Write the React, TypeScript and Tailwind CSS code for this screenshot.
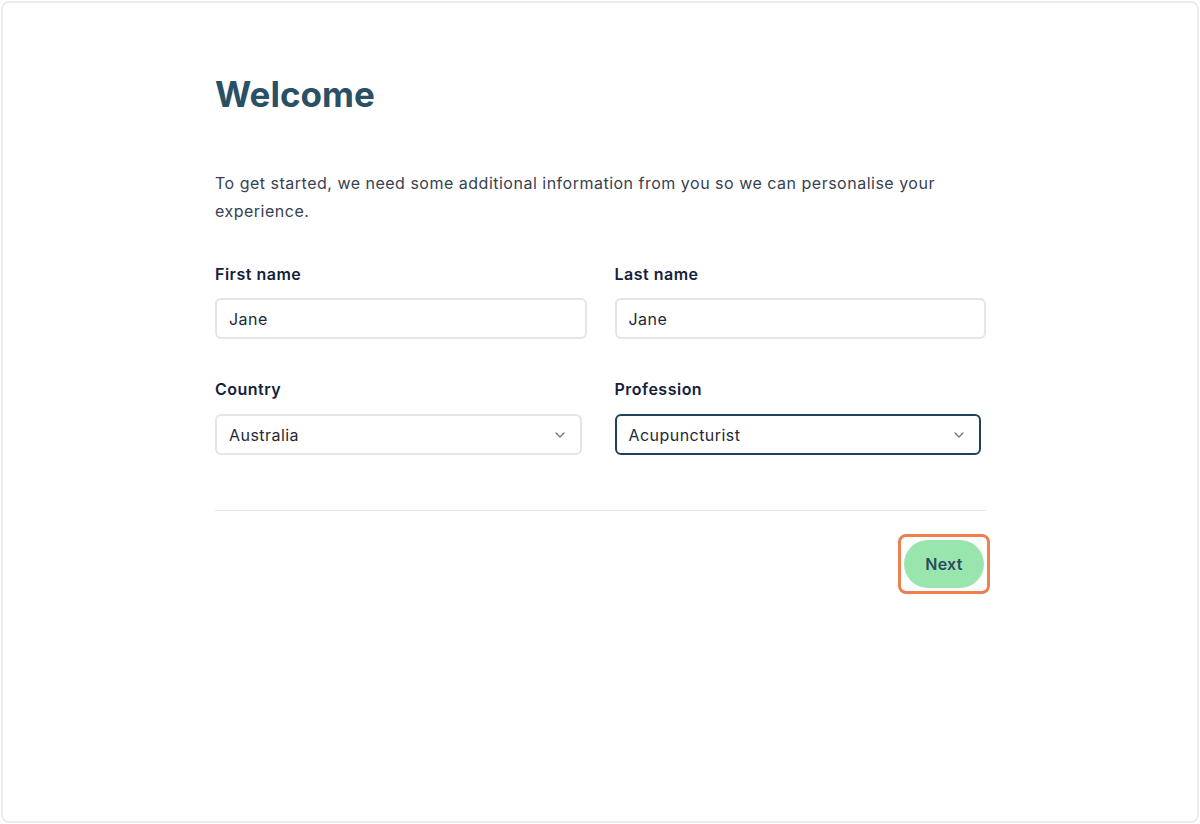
import React, { useState } from 'react';

const ChevronDown = () => (
  <svg className="w-4 h-4 text-[#6b7280]" fill="none" viewBox="0 0 24 24" stroke="currentColor" strokeWidth={1.8}>
    <path strokeLinecap="round" strokeLinejoin="round" d="M6 9l6 6 6-6" />
  </svg>
);

const App: React.FC = () => {
  const [firstName, setFirstName] = useState('Jane');
  const [lastName, setLastName] = useState('Jane');

  return (
    <div className="w-[1200px] h-[824px] bg-white font-['Inter',sans-serif] p-px">
      <div className="h-full rounded-lg border-2 border-[#ececf0] bg-white">
        <div className="w-[771px] ml-[212px] pt-[69px]">
          <h1 className="text-[35px] leading-[44px] font-bold text-[#2a5066]">Welcome</h1>

          <p className="mt-[53px] max-w-[740px] text-[16px] leading-[28px] tracking-[0.5px] text-[#374151]">
            To get started, we need some additional information from you so we can personalise your experience.
          </p>

          <div className="grid grid-cols-2 gap-x-[28px] mt-[39px]">
            <div>
              <label className="block text-[16px] leading-[20px] tracking-[0.5px] font-semibold text-[#14213d]">First name</label>
              <input
                value={firstName}
                onChange={(e) => setFirstName(e.target.value)}
                className="mt-[14px] w-full h-[41px] rounded-md border-2 border-[#e4e4ea] px-[12px] text-[16px] tracking-[0.45px] text-[#1f2937] outline-none"
              />
            </div>
            <div>
              <label className="block text-[16px] leading-[20px] tracking-[0.5px] font-semibold text-[#14213d]">Last name</label>
              <input
                value={lastName}
                onChange={(e) => setLastName(e.target.value)}
                className="mt-[14px] w-full h-[41px] rounded-md border-2 border-[#e4e4ea] px-[12px] text-[16px] tracking-[0.45px] text-[#1f2937] outline-none"
              />
            </div>
          </div>

          <div className="grid grid-cols-2 gap-x-[28px] mt-[40px]">
            <div className="pr-[5px]">
              <label className="block text-[16px] leading-[20px] tracking-[0.5px] font-semibold text-[#14213d]">Country</label>
              <div className="mt-[15px] h-[41px] rounded-md border-2 border-[#e4e4ea] px-[12px] flex items-center justify-between text-[16px] tracking-[0.45px] text-[#1f2937]">
                <span>Australia</span>
                <ChevronDown />
              </div>
            </div>
            <div className="pr-[5px]">
              <label className="block text-[16px] leading-[20px] tracking-[0.5px] font-semibold text-[#14213d]">Profession</label>
              <div className="mt-[15px] h-[41px] rounded-md border-2 border-[#1f4256] px-[12px] flex items-center justify-between text-[16px] tracking-[0.45px] text-[#1f2937]">
                <span>Acupuncturist</span>
                <ChevronDown />
              </div>
            </div>
          </div>

          <div className="mt-[55px] border-t border-[#e5e7eb]" />

          <div className="flex justify-end mt-[23px] -mr-[4px]">
            <div className="rounded-lg border-[3px] border-[#f07f4f] p-[3px]">
              <button className="w-[80px] h-[48px] rounded-full bg-[#98e6ae] text-[16px] font-semibold tracking-[0.3px] text-[#2d4a5f]">Next</button>
            </div>
          </div>
        </div>
      </div>
    </div>
  );
};

export default App;
